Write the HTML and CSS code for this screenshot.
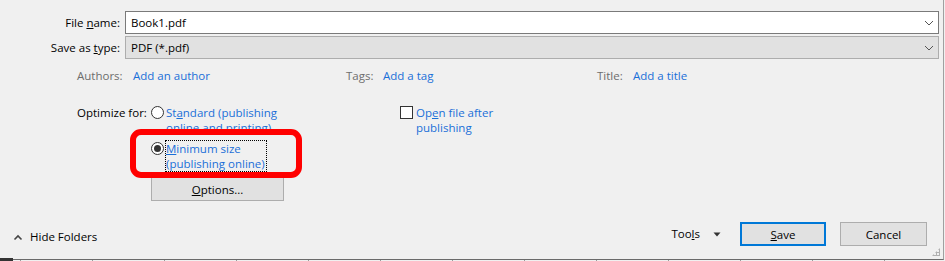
FILE: index.html
```html
<!DOCTYPE html>
<html>
<head>
<meta charset="utf-8">
<link rel="stylesheet" href="styles.css">
</head>
<body>
<div class="dialog">
  <div class="field-row">
    <label class="label">File <u>n</u>ame:</label>
    <div class="input combo">
      <span class="value">Book1.pdf</span>
      <svg class="chev" width="10" height="6" viewBox="0 0 10 6"><path d="M1 1 L5 5 L9 1" fill="none" stroke="#555" stroke-width="1"/></svg>
    </div>
  </div>
  <div class="field-row row2">
    <label class="label">Save as <u>t</u>ype:</label>
    <div class="input select">
      <span class="value">PDF (*.pdf)</span>
      <svg class="chev" width="10" height="6" viewBox="0 0 10 6"><path d="M1 1 L5 5 L9 1" fill="none" stroke="#555" stroke-width="1"/></svg>
    </div>
  </div>
  <div class="meta">
    <div class="meta-item m1"><span class="meta-label w1">Authors:</span><span class="link">Add an author</span></div>
    <div class="meta-item m2"><span class="meta-label w2">Tags:</span><span class="link">Add a tag</span></div>
    <div class="meta-item m3"><span class="meta-label w3">Title:</span><span class="link">Add a title</span></div>
  </div>
  <div class="optimize">
    <div class="opt-label">Optimize for:</div>
    <div class="opt-col">
      <div class="radio-row">
        <span class="radio"></span>
        <span class="link radio-text">St<u>a</u>ndard (publishing<br>online and printing)</span>
      </div>
      <div class="radio-row row-min">
        <span class="radio checked"></span>
        <span class="link radio-text focus"><u>M</u>inimum size<br>(publishing online)</span>
      </div>
      <button class="btn options"><u>O</u>ptions...</button>
    </div>
    <div class="check-col">
      <span class="checkbox"></span>
      <span class="link">Op<u>e</u>n file after<br>publishing</span>
    </div>
  </div>
  <div class="bottom">
    <div class="hide">
      <svg width="10" height="7" viewBox="0 0 10 7"><path d="M1.5 5.5 L5 2 L8.5 5.5" fill="none" stroke="#444" stroke-width="1.6"/></svg>
      <span>Hide Folders</span>
    </div>
    <div class="tools">
      <span>Too<u>l</u>s</span>
      <svg width="8" height="5" viewBox="0 0 8 5"><path d="M0.5 0.5 L7.5 0.5 L4 4.5 Z" fill="#333"/></svg>
    </div>
    <button class="btn save"><u>S</u>ave</button>
    <button class="btn cancel">Cancel</button>
  </div>
  <div class="grip"></div>
  <div class="highlight"></div>
</div>
<div class="sheet"><span class="corner"></span></div>
</body>
</html>
```
FILE: styles.css
```css
html, body {
  margin: 0;
  padding: 0;
  height: 261px;
  overflow: hidden;
  background: #f0f0f0;
}
body {
  font-family: "Open Sans", "Noto Sans", sans-serif;
  font-size: 11.5px;
  color: #000;
}
u { text-decoration: underline; text-underline-offset: 1px; }
.dialog {
  position: relative;
  box-sizing: border-box;
  width: 944px;
  height: 260px;
  padding-top: 11px;
  border-right: 1px solid #a0a0a0;
  border-bottom: 1px solid #6a6a6a;
  background: #f0f0f0;
}
.field-row {
  display: flex;
  align-items: center;
  height: 23px;
}
.row2 { margin-top: 2px; }
.label {
  width: 125px;
  box-sizing: border-box;
  padding-right: 5px;
  text-align: right;
  white-space: nowrap;
}
.input {
  box-sizing: border-box;
  width: 814px;
  height: 23px;
  display: flex;
  align-items: center;
  padding-left: 5px;
  padding-right: 4px;
}
.combo { background: #fff; border: 1px solid #7a7a7a; }
.select { background: #e1e1e1; border: 1px solid #adadad; }
.value { flex: 1; }
.chev { display: block; }
.meta {
  display: flex;
  margin-top: 9px;
  padding-left: 77px;
  line-height: 16px;
  height: 16px;
}
.meta-item { display: flex; }
.m1 { width: 269px; }
.m2 { width: 251px; }
.meta-label { color: #6d6d6d; }
.w1 { width: 56px; }
.w2 { width: 37px; }
.w3 { width: 36px; }
.link { color: #1a6fd8; }
.optimize {
  display: flex;
  margin-top: 21px;
  padding-left: 77px;
  line-height: 15px;
}
.opt-label { width: 74px; }
.opt-col { width: 249px; display: flex; flex-direction: column; align-items: flex-start; }
.radio-row { display: flex; align-items: flex-start; }
.radio {
  box-sizing: border-box;
  width: 13px;
  height: 13px;
  margin-top: 1px;
  margin-right: 2px;
  border: 1px solid #333;
  border-radius: 50%;
  background: #fff;
  display: flex;
  align-items: center;
  justify-content: center;
  flex: none;
}
.radio.checked::after {
  content: "";
  width: 7px;
  height: 7px;
  border-radius: 50%;
  background: #333;
}
.radio-text { display: block; }
.row-min { margin-top: 5px; }
.row-min .radio { margin-top: 2px; margin-right: 1px; }
.focus { border: 1px dotted #000; padding: 0 1px 0 0; }
.btn {
  box-sizing: border-box;
  font: inherit;
  color: #000;
  background: #e1e1e1;
  border: 1px solid #adadad;
  padding: 0;
  margin: 0;
}
.options {
  width: 133px;
  height: 24px;
  margin-top: 5px;
}
.check-col { display: flex; align-items: flex-start; }
.checkbox {
  box-sizing: border-box;
  width: 13px;
  height: 13px;
  margin-top: 1px;
  margin-right: 3px;
  border: 1px solid #333;
  background: #fff;
  flex: none;
}
.bottom {
  display: flex;
  align-items: flex-start;
  margin-top: 21px;
  padding-left: 13px;
  padding-right: 16px;
}
.hide {
  display: flex;
  align-items: center;
  gap: 7px;
  margin-top: 7px;
  line-height: 16px;
}
.hide svg { display: block; }
.tools {
  margin-left: auto;
  margin-top: 4px;
  display: flex;
  align-items: center;
  gap: 13px;
  line-height: 16px;
  margin-right: 19px;
}
.tools svg { display: block; }
.save {
  width: 86px;
  height: 24px;
  border: 2px solid #0078d7;
}
.cancel {
  width: 87px;
  height: 24px;
  margin-left: 14px;
}
.grip {
  position: absolute;
  right: 3px;
  bottom: 3px;
  width: 8px;
  height: 8px;
  background:
    radial-gradient(circle, #b0b0b0 1px, transparent 1.2px) 0 0 / 3px 3px;
  clip-path: polygon(100% 0, 100% 100%, 0 100%);
}
.highlight {
  position: absolute;
  left: 130px;
  top: 129px;
  width: 172px;
  height: 49px;
  box-sizing: border-box;
  border: 6px solid #ff0000;
  border-radius: 11px;
}
.sheet {
  height: 1px;
  background-image: linear-gradient(90deg, #9a9a9a 0 1px, transparent 1px);
  background-size: 72px 1px;
  background-position: 20px 0;
  background-repeat: repeat-x;
  position: relative;
}
.corner {
  position: absolute;
  left: 0;
  top: -2px;
  width: 13px;
  height: 3px;
  background: #333;
}
```
